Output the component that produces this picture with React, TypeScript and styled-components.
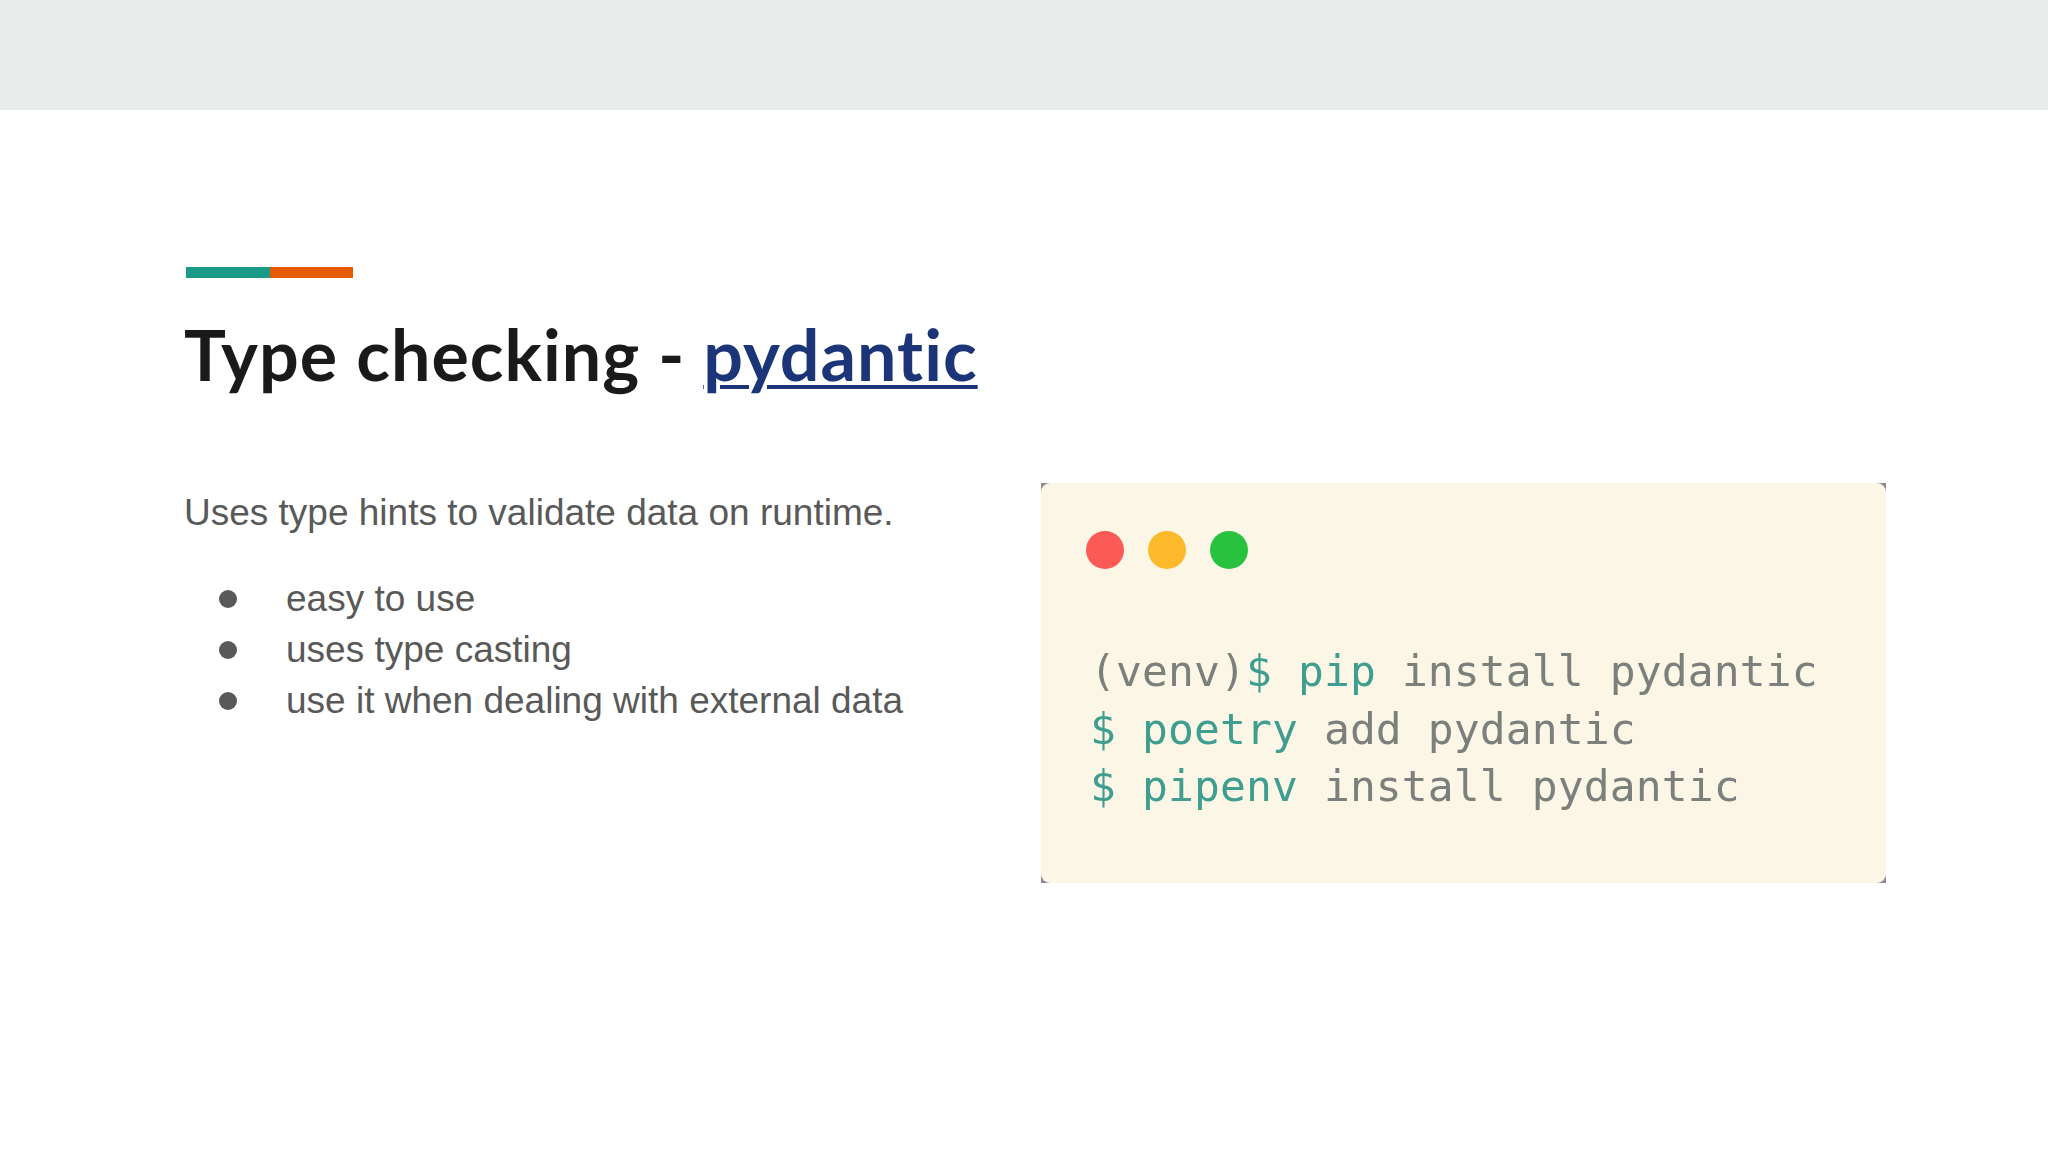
import styled, { createGlobalStyle } from "styled-components";

const GlobalStyle = createGlobalStyle`
  html, body {
    margin: 0;
    padding: 0;
    background: #fff;
  }
`;

const bullets = [
  "easy to use",
  "uses type casting",
  "use it when dealing with external data",
];

const dotColors = ["#fb5a56", "#fdb92c", "#27c23e"];

export default function App() {
  return (
    <Slide>
      <GlobalStyle />
      <TopBand />
      <Main>
        <AccentBar>
          <AccentPart $color="#1a9a87" $width={84} />
          <AccentPart $color="#e65a00" $width={83} />
        </AccentBar>
        <Title>
          Type checking - <TitleLink href="#">pydantic</TitleLink>
        </Title>
        <Columns>
          <TextColumn>
            <Lead>Uses type hints to validate data on runtime.</Lead>
            <BulletList>
              {bullets.map((text) => (
                <BulletItem key={text}>
                  <BulletMark />
                  {text}
                </BulletItem>
              ))}
            </BulletList>
          </TextColumn>
          <TerminalFrame>
            <Terminal>
              <Dots>
                {dotColors.map((color) => (
                  <Dot key={color} $color={color} />
                ))}
              </Dots>
              <Code>
                <CodeLine>
                  (venv)<Accent>$ pip</Accent> install pydantic
                </CodeLine>
                <CodeLine>
                  <Accent>$ poetry</Accent> add pydantic
                </CodeLine>
                <CodeLine>
                  <Accent>$ pipenv</Accent> install pydantic
                </CodeLine>
              </Code>
            </Terminal>
          </TerminalFrame>
        </Columns>
      </Main>
    </Slide>
  );
}

const Slide = styled.div`
  width: 2048px;
  height: 1152px;
  overflow: hidden;
  background: #fff;
`;

const TopBand = styled.div`
  height: 110px;
  background: #e9eeec;
`;

const Main = styled.div`
  padding: 157px 162px 0 184px;
`;

const AccentBar = styled.div`
  display: flex;
  margin-left: 2px;
  height: 11px;
`;

const AccentPart = styled.div<{ $color: string; $width: number }>`
  width: ${({ $width }) => $width}px;
  background: ${({ $color }) => $color};
`;

const Title = styled.h1`
  margin: 38px 0 0;
  font-family: "Lato", sans-serif;
  font-weight: 700;
  font-size: 70px;
  line-height: 76px;
  letter-spacing: 1px;
  font-variant-ligatures: none;
  color: #1a1a1a;
`;

const TitleLink = styled.a`
  color: #1c3578;
  text-decoration: underline;
  text-decoration-thickness: 4px;
  text-underline-offset: 4px;
`;

const Columns = styled.div`
  display: flex;
  justify-content: space-between;
  align-items: flex-start;
  margin-top: 91px;
`;

const TextColumn = styled.div`
  font-family: "Liberation Sans", Arial, sans-serif;
  font-size: 37px;
  color: #595959;
  padding-top: 4px;
`;

const Lead = styled.p`
  margin: 0;
  line-height: 51px;
`;

const BulletList = styled.ul`
  list-style: none;
  margin: 35px 0 0;
  padding: 0 0 0 102px;
`;

const BulletItem = styled.li`
  position: relative;
  line-height: 51px;
`;

const BulletMark = styled.span`
  position: absolute;
  left: -67px;
  top: 17px;
  width: 18px;
  height: 18px;
  border-radius: 50%;
  background: #595959;
`;

const TerminalFrame = styled.div`
  width: 845px;
  height: 400px;
  background: #8b8b88;
`;

const Terminal = styled.div`
  box-sizing: border-box;
  height: 100%;
  padding: 48px 0 0 45px;
  border-radius: 9px;
  background: #fcf6e6;
`;

const Dots = styled.div`
  display: flex;
  gap: 24px;
`;

const Dot = styled.div<{ $color: string }>`
  width: 38px;
  height: 38px;
  border-radius: 50%;
  background: ${({ $color }) => $color};
`;

const Code = styled.div`
  margin-top: 74px;
  margin-left: 4px;
  font-family: "DejaVu Sans Mono", monospace;
  font-size: 43px;
  line-height: 57.5px;
  letter-spacing: 0.1px;
  color: #7b807c;
  white-space: pre;
  filter: blur(0.5px);
`;

const CodeLine = styled.div``;

const Accent = styled.span`
  color: #3f9e8f;
`;
